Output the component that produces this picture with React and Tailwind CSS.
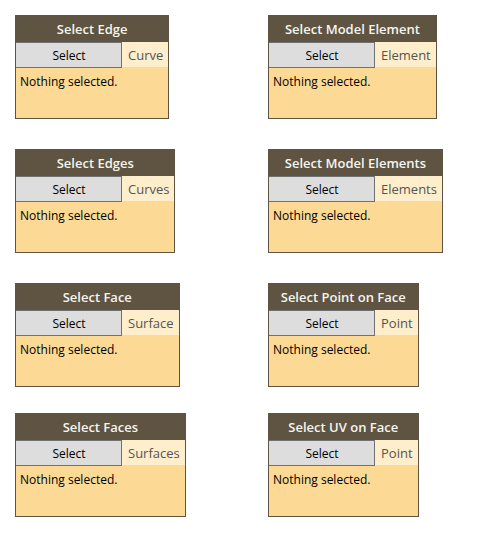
const rowGroups = [
  [
    { title: "Select Edge", output: "Curve" },
    { title: "Select Model Element", output: "Element" },
    { title: "Select Edges", output: "Curves" },
    { title: "Select Model Elements", output: "Elements" },
    { title: "Select Face", output: "Surface" },
    { title: "Select Point on Face", output: "Point" },
  ],
  [
    { title: "Select Faces", output: "Surfaces" },
    { title: "Select UV on Face", output: "Point" },
  ],
];

function SelectionNode({ title, output }) {
  return (
    <section className="flex h-[104px] flex-col border border-[#5e5441] bg-[#fcda96]">
      <h2 className="h-[26px] bg-[#5e5441] text-center text-[13px] leading-[26px] font-semibold text-[#f5f4f0]">
        {title}
      </h2>
      <div className="flex items-start">
        <button
          type="button"
          aria-label={`Select, ${title}`}
          className="h-[26px] w-[106px] border-y border-r border-[#6f7174] bg-[#dddddd] pt-px pl-px text-center text-xs leading-6 text-black"
        >
          Select
        </button>
        <span className="h-[25px] grow bg-[#ffeecb] pr-[5px] pl-1.5 text-[13px] leading-[26px] text-[#555555]">
          {output}
        </span>
      </div>
      <p className="px-1 pt-1 text-xs leading-5 text-black">Nothing selected.</p>
    </section>
  );
}

export default function App() {
  return (
    <main className="flex min-h-screen flex-col gap-[26px] bg-white p-[15px] font-['Open_Sans',sans-serif]">
      {rowGroups.map((nodes, index) => (
        <div
          key={index}
          className="grid grid-cols-2 justify-items-start gap-x-14 gap-y-[30px]"
        >
          {nodes.map((node) => (
            <SelectionNode key={node.title} {...node} />
          ))}
        </div>
      ))}
    </main>
  );
}
